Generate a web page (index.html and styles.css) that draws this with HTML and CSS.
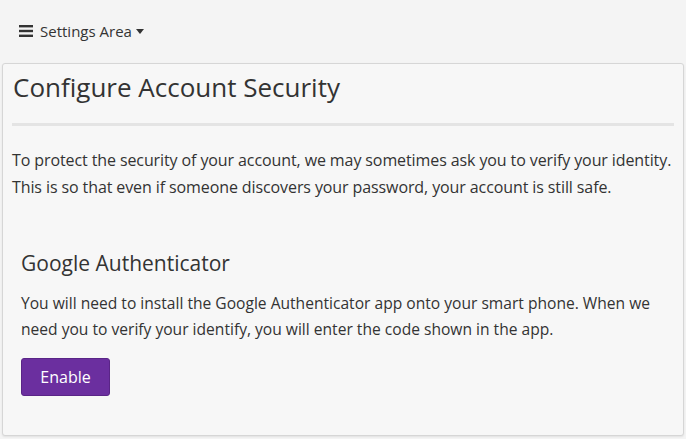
FILE: index.html
```html
<!DOCTYPE html>
<html lang="en">
<head>
<meta charset="UTF-8">
<title>Account Security</title>
<link rel="stylesheet" href="styles.css">
</head>
<body>
  <div class="topbar">
    <a href="#" class="menu-toggle">
      <svg class="menu-icon" width="14" height="12" viewBox="0 0 14 12"><rect x="0" y="0" width="14" height="2.4"/><rect x="0" y="4.8" width="14" height="2.4"/><rect x="0" y="9.6" width="14" height="2.4"/></svg>
      Settings Area
      <span class="caret"></span>
    </a>
  </div>

  <div class="panel">
    <h1 class="panel-title">Configure Account Security</h1>
    <hr class="divider">
    <p class="intro">To protect the security of your account, we may sometimes ask you to verify your identity. This is so that even if someone discovers your password, your account is still safe.</p>

    <div class="method">
      <h2>Google Authenticator</h2>
      <p>You will need to install the Google Authenticator app onto your smart phone. When we need you to verify your identify, you will enter the code shown in the app.</p>
      <button class="btn-enable">Enable</button>
    </div>
  </div>
</body>
</html>
```

FILE: styles.css
```css
body {
  margin: 0;
  padding: 0;
  background: #f4f4f4;
  color: #333;
  font-family: "Open Sans", "Liberation Sans", sans-serif;
}
.topbar {
  height: 62px;
  padding: 0 19px;
  display: flex;
  align-items: center;
}
.menu-toggle {
  color: #333;
  text-decoration: none;
  font-size: 15px;
  display: flex;
  align-items: center;
  gap: 7px;
}
.menu-icon {
  fill: #333;
}
.caret {
  display: inline-block;
  width: 0;
  height: 0;
  margin-left: -3px;
  border-left: 4.5px solid transparent;
  border-right: 4.5px solid transparent;
  border-top: 5px solid #333;
}

.panel {
  margin: 1px 2px 2px 2px;
  background: #f7f7f7;
  border: 1px solid #d6d6d6;
  border-radius: 3px;
  padding: 5px 9px 39px 9px;
  box-shadow: 0 1px 2px rgba(0, 0, 0, 0.08);
}
.panel-title {
  margin: 0;
  font-size: 26px;
  font-weight: normal;
  line-height: 36px;
  padding-left: 1px;
}
.divider {
  border: none;
  border-top: 3px solid #e4e4e4;
  margin: 18px 0 21px 0;
}
.intro {
  font-size: 16px;
  line-height: 27px;
  margin: 0 0 47px 0;
  letter-spacing: -0.1px;
}
.method {
  padding: 0 9px;
}
.method h2 {
  margin: 0 0 12px 0;
  font-size: 21px;
  font-weight: normal;
  line-height: 30px;
}
.method p {
  font-size: 15.6px;
  line-height: 26px;
  margin: 0 0 16px 0;
}
.btn-enable {
  background: #6b2f9f;
  color: #fff;
  border: 1px solid #5a2587;
  border-radius: 3px;
  font-family: inherit;
  font-size: 16px;
  width: 89px;
  height: 38px;
  cursor: pointer;
}
```
